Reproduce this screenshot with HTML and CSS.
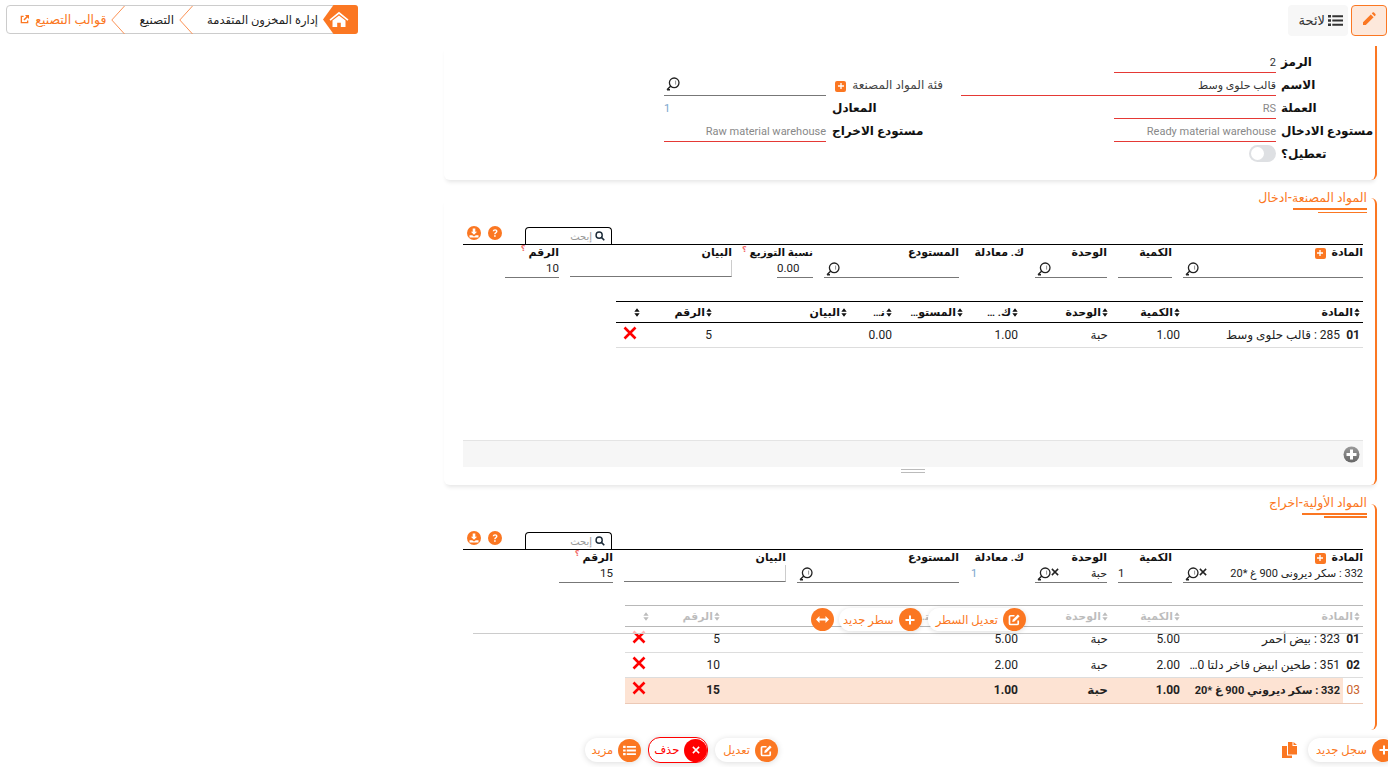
FILE: index.html
```html
<!DOCTYPE html>
<html lang="ar" dir="rtl">
<head>
    <meta charset="UTF-8">
    <title>قوالب التصنيع</title>
    <link rel="stylesheet" href="styles.css">
</head>
<body>
    <svg class="defs" width="0" height="0">
        <symbol id="i-search" viewBox="0 0 14 14"><circle cx="8.2" cy="5.8" r="4.8" fill="none" stroke="currentColor" stroke-width="1.3"/><path d="M4.8 9 1 12.8M1 12.8h3" fill="none" stroke="currentColor" stroke-width="1.4"/><path d="M9.6 3.6v4" stroke="currentColor" stroke-width=".8" opacity=".6"/></symbol>
        <symbol id="i-sort" viewBox="0 0 7 10"><path d="M3.5 0 6.6 4H.4zM3.5 10 .4 6h6.2z" fill="currentColor"/></symbol>
        <symbol id="i-x" viewBox="0 0 14 14"><path d="M1.5 1.5 12.5 12.5M12.5 1.5 1.5 12.5" stroke="currentColor" stroke-width="2.6"/></symbol>
        <symbol id="i-plus" viewBox="0 0 12 12"><path d="M6 1.5v9M1.5 6h9" stroke="currentColor" stroke-width="2"/></symbol>
        <symbol id="i-edit" viewBox="0 0 14 14"><path d="M11 8v3.2c0 .7-.5 1.2-1.2 1.2H2.8c-.7 0-1.2-.5-1.2-1.2V4.200c0-.7.5-1.200 1.200-1.200H7" fill="none" stroke="currentColor" stroke-width="1.800"/><path d="M5 7.300 10.600 1.700l1.900 1.900L6.900 9.200l-2.300.4z" fill="currentColor"/></symbol>
        <symbol id="i-list" viewBox="0 0 14 12"><path d="M0 .8h2.800v2.400H0zM0 4.800h2.800v2.400H0zM0 8.800h2.800v2.400H0zM4 1h10v2H4zM4 5h10v2H4zM4 9h10v2H4z" fill="currentColor"/></symbol>
        <symbol id="i-download" viewBox="0 0 14 14"><circle cx="7" cy="7" r="7" fill="currentColor"/><path d="M5.700 2.500h2.600v3.300h1.800L7 8.800 3.900 5.800h1.800zM2.500 9.300h2.700L7 10.500l1.800-1.200h2.700v2.200h-9z" fill="#fff"/></symbol>
        <symbol id="i-help" viewBox="0 0 14 14"><circle cx="7" cy="7" r="7" fill="currentColor"/><path d="M4.700 5.300C4.800 4 5.800 3.200 7.100 3.200c1.400 0 2.400.8 2.400 2 0 1.800-1.900 1.700-1.900 3H6.200c0-2 1.800-1.900 1.800-3 0-.5-.4-.8-.9-.8s-.9.400-1 .9zM6.100 9.300h1.600v1.500H6.100z" fill="#fff"/></symbol>
    </svg>

    <div class="page">
        <header class="topbar">
            <button class="edit-toggle">
                <svg width="14" height="14" viewBox="0 0 14 14"><path d="M1 10.200 8.800 2.400l2.800 2.800L3.800 13H1zM9.800 1.400l.8-.8c.4-.4 1-.4 1.400 0l1.400 1.400c.4.4.4 1 0 1.400l-.8.800z" fill="currentColor"/></svg>
            </button>
            <button class="list-toggle">
                <svg width="15" height="13"><use href="#i-list"/></svg>
                <span>لائحة</span>
            </button>
            <nav class="crumbs">
                <span class="crumb-home">
                    <svg width="20" height="17" viewBox="0 0 20 17"><path d="M10 .8 19.500 8.600l-1 1.200L10 3 1.500 9.800l-1-1.200zM3.500 9.600 10 4.500l6.500 5.100V16h-4.700v-4.200H8.200V16H3.500z" fill="#fff"/></svg>
                </span>
                <span class="crumb-text crumb-first">إدارة المخزون المتقدمة</span>
                <svg class="chev" width="14" height="28" viewBox="0 0 14 28"><path d="M13.500 0 .8 14l12.700 14" fill="none" stroke="currentColor"/></svg>
                <span class="crumb-text">التصنيع</span>
                <svg class="chev" width="14" height="28" viewBox="0 0 14 28"><path d="M13.500 0 .8 14l12.700 14" fill="none" stroke="currentColor"/></svg>
                <span class="crumb-text crumb-last">قوالب التصنيع</span>
                <svg class="crumb-ext" width="9" height="9" viewBox="0 0 10 10"><path d="M4 1.500H1.500v7h7V6" fill="none" stroke="currentColor" stroke-width="1.500"/><path d="M5.500 0H10v4.500L8.300 2.900 5 6.200 3.800 5 7.100 1.700z" fill="currentColor"/></svg>
            </nav>
        </header>

        <main class="main">
            <section class="card card-head">
                <div class="head-grid">
                    <label class="lbl c-label r1">الرمز</label>
                    <div class="val line-red c-input r1 dark">2</div>

                    <label class="lbl c-label r2">الاسم</label>
                    <div class="val line-red c-name r2 dark">قالب حلوى وسط</div>
                    <label class="lbl-plain c-cat r2">فئة المواد المصنعة <span class="plus-box"><svg width="8" height="8"><use href="#i-plus"/></svg></span></label>
                    <div class="line-gray c-input2 r2 lookup"><svg class="mag" width="14" height="14"><use href="#i-search"/></svg></div>

                    <label class="lbl c-label r3">العملة</label>
                    <div class="val line-red c-input r3">RS</div>
                    <label class="lbl c-label2 r3">المعادل</label>
                    <div class="val c-input2 r3 blue to-left">1</div>

                    <label class="lbl c-label r4">مستودع الادخال</label>
                    <div class="val line-red c-input r4">Ready material warehouse</div>
                    <label class="lbl c-label2 r4">مستودع الاخراج</label>
                    <div class="val line-red c-input2 r4">Raw material warehouse</div>

                    <label class="lbl c-label r5">تعطيل؟</label>
                    <div class="c-input r5"><span class="switch"></span></div>
                </div>
            </section>

            <section class="card card-in">
                <h2 class="sec-title">المواد المصنعة-ادخال</h2>
                <div class="under-thick u-in"></div>
                <div class="under-thin u-in2"></div>

                <div class="toolbar">
                    <div class="search-tab"><svg width="10" height="10" viewBox="0 0 14 14"><circle cx="5.800" cy="5.800" r="4.300" fill="none" stroke="currentColor" stroke-width="2"/><path d="m9 9 4 4" stroke="currentColor" stroke-width="2.200"/></svg><span>إبحث</span></div>
                    <svg class="tool" width="14" height="14"><use href="#i-help"/></svg>
                    <svg class="tool" width="14" height="14"><use href="#i-download"/></svg>
                </div>

                <div class="form-row">
                    <div class="f w180"><label>المادة <span class="plus-box"><svg width="8" height="8"><use href="#i-plus"/></svg></span></label><div class="fi lookup"><svg class="mag" width="14" height="14"><use href="#i-search"/></svg></div></div>
                    <div class="f w54"><label>الكمية</label><div class="fi"></div></div>
                    <div class="f w72"><label>الوحدة</label><div class="fi lookup"><svg class="mag" width="14" height="14"><use href="#i-search"/></svg></div></div>
                    <div class="f w54"><label>ك. معادلة</label></div>
                    <div class="f w135"><label>المستودع</label><div class="fi lookup"><svg class="mag" width="14" height="14"><use href="#i-search"/></svg></div></div>
                    <div class="f w70"><label class="lbl-tight">نسبة التوزيع<sup>؟</sup></label><div class="fi short to-left">0.00</div></div>
                    <div class="f w162"><label>البيان</label><div class="fi area"></div></div>
                    <div class="f w54"><label>الرقم<sup>؟</sup></label><div class="fi">10</div></div>
                </div>

                <div class="table-wrap wrap-in">
                    <table class="grid">
                        <colgroup><col class="k1"><col class="k2"><col class="k3"><col class="k4"><col class="k5"><col class="k6"><col class="k7"><col class="k8"><col class="k9"><col class="k10"></colgroup>
                        <thead><tr>
                            <th colspan="2"><svg class="sort" width="6" height="9"><use href="#i-sort"/></svg>المادة</th>
                            <th><svg class="sort" width="6" height="9"><use href="#i-sort"/></svg>الكمية</th>
                            <th><svg class="sort" width="6" height="9"><use href="#i-sort"/></svg>الوحدة</th>
                            <th class="cut"><svg class="sort" width="6" height="9"><use href="#i-sort"/></svg>ك. معادلة</th>
                            <th class="cut cut-wide"><svg class="sort" width="6" height="9"><use href="#i-sort"/></svg>المستودع</th>
                            <th class="cut"><svg class="sort" width="6" height="9"><use href="#i-sort"/></svg>نسبة التوزيع</th>
                            <th><svg class="sort" width="6" height="9"><use href="#i-sort"/></svg>البيان</th>
                            <th><svg class="sort" width="6" height="9"><use href="#i-sort"/></svg>الرقم</th>
                            <th><svg class="sort" width="6" height="9"><use href="#i-sort"/></svg></th>
                        </tr></thead>
                        <tbody><tr>
                            <td class="idx">01</td><td>285 : قالب حلوى وسط</td><td>1.00</td><td>حبة</td><td>1.00</td><td></td><td>0.00</td><td></td><td>5</td>
                            <td class="del"><svg width="14" height="14"><use href="#i-x"/></svg></td>
                        </tr></tbody>
                    </table>
                </div>

                <div class="grid-foot">
                    <svg width="17" height="17" viewBox="0 0 17 17"><defs><linearGradient id="gr" x1="0" y1="0" x2="0" y2="1"><stop offset="0" stop-color="#9a9a9a"/><stop offset="1" stop-color="#666"/></linearGradient></defs><circle cx="8.500" cy="8.500" r="8" fill="url(#gr)"/><path d="M8.500 3.500v10M3.500 8.500h10" stroke="#fff" stroke-width="3"/></svg>
                </div>
                <div class="grip"></div>
            </section>

            <section class="card card-out">
                <h2 class="sec-title">المواد الأولية-اخراج</h2>
                <div class="under-thick u-out"></div>
                <div class="under-thin u-out2"></div>

                <div class="toolbar">
                    <div class="search-tab"><svg width="10" height="10" viewBox="0 0 14 14"><circle cx="5.800" cy="5.800" r="4.300" fill="none" stroke="currentColor" stroke-width="2"/><path d="m9 9 4 4" stroke="currentColor" stroke-width="2.200"/></svg><span>إبحث</span></div>
                    <svg class="tool" width="14" height="14"><use href="#i-help"/></svg>
                    <svg class="tool" width="14" height="14"><use href="#i-download"/></svg>
                </div>

                <div class="form-row">
                    <div class="f w180"><label>المادة <span class="plus-box"><svg width="8" height="8"><use href="#i-plus"/></svg></span></label><div class="fi lookup"><span class="fi-text">332 : سكر ديرونى 900 غ *20</span><svg class="clr" width="8" height="8"><use href="#i-x"/></svg><svg class="mag-x" width="14" height="14"><use href="#i-search"/></svg></div></div>
                    <div class="f w54"><label>الكمية</label><div class="fi to-left">1</div></div>
                    <div class="f w72"><label>الوحدة</label><div class="fi lookup"><span class="fi-text">حبة</span><svg class="clr" width="8" height="8"><use href="#i-x"/></svg><svg class="mag-x" width="14" height="14"><use href="#i-search"/></svg></div></div>
                    <div class="f w54"><label>ك. معادلة</label><div class="fi bare">1</div></div>
                    <div class="f w162"><label>المستودع</label><div class="fi lookup"><svg class="mag" width="14" height="14"><use href="#i-search"/></svg></div></div>
                    <div class="f w162"><label>البيان</label><div class="fi area"></div></div>
                    <div class="f w54"><label>الرقم<sup>؟</sup></label><div class="fi">15</div></div>
                </div>

                <div class="table-wrap wrap-out">
                    <table class="grid grid-out">
                        <colgroup><col class="k1"><col class="k2"><col class="k3"><col class="k4"><col class="k5"><col class="k6"><col class="o7"><col class="o8"><col class="o9"><col class="k10"></colgroup>
                        <thead><tr>
                            <th colspan="2"><svg class="sort" width="6" height="9"><use href="#i-sort"/></svg>المادة</th>
                            <th><svg class="sort" width="6" height="9"><use href="#i-sort"/></svg>الكمية</th>
                            <th><svg class="sort" width="6" height="9"><use href="#i-sort"/></svg>الوحدة</th>
                            <th class="cut"><svg class="sort" width="6" height="9"><use href="#i-sort"/></svg>ك. معادلة</th>
                            <th class="cut"><svg class="sort" width="6" height="9"><use href="#i-sort"/></svg>المستودع</th>
                            <th></th>
                            <th><svg class="sort" width="6" height="9"><use href="#i-sort"/></svg>البيان</th>
                            <th><svg class="sort" width="6" height="9"><use href="#i-sort"/></svg>الرقم</th>
                            <th><svg class="sort" width="6" height="9"><use href="#i-sort"/></svg></th>
                        </tr></thead>
                        <tbody>
                            <tr><td class="idx">01</td><td class="name">323 : بيض أحمر</td><td>5.00</td><td>حبة</td><td>5.00</td><td></td><td></td><td></td><td>5</td><td class="del"><svg width="14" height="14"><use href="#i-x"/></svg></td></tr>
                            <tr><td class="idx">02</td><td class="name">351 : طحين ابيض فاخر دلتا 000 كغ</td><td>2.00</td><td>حبة</td><td>2.00</td><td></td><td></td><td></td><td>10</td><td class="del"><svg width="14" height="14"><use href="#i-x"/></svg></td></tr>
                            <tr class="current"><td class="idx">03</td><td class="name">332 : سكر ديروني 900 غ *20</td><td>1.00</td><td>حبة</td><td>1.00</td><td></td><td></td><td></td><td>15</td><td class="del"><svg width="14" height="14"><use href="#i-x"/></svg></td></tr>
                        </tbody>
                    </table>
                    <div class="row-actions">
                        <button class="pill pill-edit"><span class="dot"><svg width="13" height="13"><use href="#i-edit"/></svg></span>تعديل السطر</button>
                        <button class="pill pill-line"><span class="dot"><svg width="12" height="12"><use href="#i-plus"/></svg></span>سطر جديد</button>
                        <button class="dot dot-solo"><svg width="13" height="9" viewBox="0 0 13 9"><path d="M0 4.500 3.500 1v2.500h6V1L13 4.500 9.500 8V5.500h-6V8z" fill="currentColor"/></svg></button>
                    </div>
                </div>
            </section>

            <footer class="actions">
                <button class="pill pill-new"><span class="dot"><svg width="12" height="12"><use href="#i-plus"/></svg></span>سجل جديد</button>
                <svg class="copy" width="17" height="16" viewBox="0 0 17 16"><path d="M6 0h4.500v4H15v8.500H6zM11.500 0 15 3h-3.500zM0 4h5v9.500h5V16H0z" fill="currentColor"/></svg>
                <div class="actions-mid">
                    <button class="pill pill-wide"><span class="dot"><svg width="13" height="13"><use href="#i-edit"/></svg></span>تعديل</button>
                    <button class="pill pill-del"><span class="dot"><svg width="8" height="8"><use href="#i-x"/></svg></span>حذف</button>
                    <button class="pill"><span class="dot"><svg width="13" height="11"><use href="#i-list"/></svg></span>مزيد</button>
                </div>
            </footer>
        </main>
    </div>
</body>
</html>
```

FILE: styles.css
```css
* {
    box-sizing: border-box;
}

html, body {
    margin: 0;
    height: 100%;
    overflow: hidden;
}

body {
    font-family: Roboto, "DejaVu Sans", sans-serif;
    font-size: 12px;
    color: #222;
    background-color: #fff;
}

button {
    font-family: inherit;
    cursor: pointer;
}

.defs {
    position: absolute;
}

.page {
    width: 1388px;
    height: 767px;
    overflow: hidden;
}

/* Top bar */
.topbar {
    display: flex;
    align-items: flex-start;
    height: 46px;
    padding: 5px 1px 0 6px;
}

.edit-toggle {
    width: 36px;
    height: 31px;
    margin-left: 3px;
    padding: 0;
    color: #fb7722;
    background-color: #fde8db;
    border: 1px solid #fb7722;
    border-radius: 4px;
}

.list-toggle {
    display: flex;
    align-items: center;
    gap: 3px;
    width: 60px;
    height: 31px;
    padding: 0 5px;
    font-size: 13px;
    color: #333;
    background-color: #f7f7f7;
    border: 0;
    border-radius: 4px;
}

.crumbs {
    display: flex;
    align-items: center;
    width: 352px;
    height: 29px;
    margin-right: auto;
    font-size: 12px;
    border: 1px solid #ccc;
    border-radius: 4px;
}

.crumb-home {
    display: flex;
    align-items: center;
    justify-content: center;
    width: 35px;
    height: 29px;
    margin: -1px -1px -1px 0;
    padding-right: 3px;
    background-color: #fb7722;
    border-radius: 0 3px 3px 0;
    clip-path: polygon(100% 0, 100% 100%, 30% 100%, 0 50%, 30% 0);
}

.crumb-text {
    margin-right: 5px;
    white-space: nowrap;
}

.crumb-first {
    font-size: 11.500px;
}

.crumb-last {
    font-size: 12.500px;
    color: #fb7722;
}

.chev {
    margin-right: 14px;
    color: #fb9255;
}

.crumb-ext {
    margin-right: 6px;
    color: #fb7722;
}

/* Cards */
.main {
    width: 933px;
    margin-right: 11px;
}

.card {
    padding-top: 1px;
    border-right: 2px solid #fb7722;
    border-radius: 0 0 6px 6px;
    box-shadow: 0 4px 4px -2px rgba(0, 0, 0, 0.1);
}

.card-head {
    height: 134px;
    padding-top: 4px;
}

.card-in {
    height: 287px;
    margin-top: 18px;
    padding-right: 12px;
    padding-left: 19px;
    border-top-right-radius: 6px;
}

.card-out {
    height: 226px;
    margin-top: 19px;
    padding-right: 12px;
    padding-left: 19px;
    border-top-right-radius: 6px;
    box-shadow: none;
}

/* Head form */
.head-grid {
    display: grid;
    grid-template-columns: 94px 5px 162px 153px 129px 6px 162px;
    grid-template-rows: repeat(5, 23px);
}

.c-label { grid-column: 1; }
.c-input { grid-column: 3; }
.c-name { grid-column: 3 / 5; }
.c-cat { grid-column: 5; }
.c-label2 { grid-column: 5 / 6; }
.c-input2 { grid-column: 7; }
.r1 { grid-row: 1; }
.r2 { grid-row: 2; }
.r3 { grid-row: 3; }
.r4 { grid-row: 4; }
.r5 { grid-row: 5; }

.lbl {
    padding-top: 1px;
    font-size: 12px;
    font-weight: 600;
    line-height: 23px;
    color: #111;
    text-align: left;
    white-space: nowrap;
}

.lbl-plain {
    padding-top: 1px;
    padding-right: 18px;
    font-size: 12px;
    line-height: 23px;
    color: #444;
    white-space: nowrap;
}

.val {
    height: 23px;
    padding-top: 4px;
    font-size: 11px;
    line-height: 18px;
    color: #888;
    white-space: nowrap;
}

.dark { color: #333; }
.blue { color: #7aa5cc; }
.to-left { text-align: left; }

.line-red { border-bottom: 1px solid #e53935; }
.line-gray { border-bottom: 1px solid #777; height: 23px; }

.lookup {
    display: flex;
    align-items: center;
}

.mag {
    margin-right: auto;
    margin-left: 2px;
    color: #222;
}

.plus-box {
    display: inline-flex;
    align-items: center;
    justify-content: center;
    width: 11px;
    height: 11px;
    margin-right: 3px;
    color: #fff;
    vertical-align: -1px;
    background-color: #fb7722;
    border-radius: 2px;
}

.switch {
    display: block;
    position: relative;
    width: 27px;
    height: 17px;
    margin-top: 3px;
    background-color: #dee0e3;
    border-radius: 9px;
}

.switch::after {
    content: "";
    position: absolute;
    top: 2px;
    left: 2px;
    width: 13px;
    height: 13px;
    background-color: #fff;
    border-radius: 50%;
}

/* Section titles */
.sec-title {
    height: 20px;
    margin: -11px -4px 0 0;
    font-size: 12.500px;
    font-weight: 500;
    line-height: 20px;
    color: #fb7722;
}

.card-out .sec-title {
    margin-top: -12px;
}

.under-thick {
    height: 2px;
    margin-right: -4px;
    background-color: #fb7722;
}

.under-thin {
    height: 1px;
    margin: 2px -4px 0 0;
    background-color: #fb7722;
}

.u-in { width: 74px; }
.u-in2 { width: 49px; }
.u-out { width: 65px; }
.u-out2 { width: 43px; height: 2px; margin-top: 1px; }

/* Toolbar above the forms */
.toolbar {
    display: flex;
    align-items: center;
    justify-content: flex-end;
    gap: 7px;
    height: 18px;
    margin-top: 14px;
    padding-left: 4px;
    border-bottom: 1px solid #000;
}

.search-tab {
    display: flex;
    align-items: center;
    gap: 3px;
    width: 87px;
    height: 17px;
    margin-left: 16px;
    padding-right: 6px;
    font-size: 10px;
    color: #1b2a38;
    border: 1px solid #000;
    border-bottom: 0;
    border-radius: 4px 4px 0 0;
}

.search-tab span {
    color: #999;
}

.tool {
    margin-bottom: 6px;
    color: #fb7722;
}

/* Line editor */
.form-row {
    display: flex;
    gap: 11px;
    height: 33px;
}

.f {
    flex: none;
}

.w180 { width: 180px; }
.w54 { width: 54px; }
.w72 { width: 72px; }
.w135 { width: 135px; }
.w70 { width: 70px; }
.w162 { width: 162px; }

.f label {
    display: block;
    height: 15px;
    font-size: 11px;
    font-weight: 600;
    line-height: 15px;
    color: #111;
    white-space: nowrap;
}

.f .lbl-tight {
    font-size: 10.500px;
}

.f sup {
    margin-right: 3px;
    font-size: 8px;
    font-weight: 700;
    line-height: 0;
    color: #f26a6a;
}

.fi {
    height: 18px;
    font-size: 11.500px;
    line-height: 17px;
    color: #222;
    border-bottom: 1px solid #777;
}

.short {
    width: 36px;
}

.area {
    height: 17px;
    border-right: 1px solid #ccc;
}

.bare {
    padding-left: 1px;
    font-size: 11px;
    color: #7aa5cc;
    text-align: left;
    border-bottom: 0;
}

.fi-text {
    font-size: 11px;
    white-space: nowrap;
}

.clr {
    margin-right: auto;
    margin-bottom: 3px;
    color: #222;
}

.mag-x {
    margin-left: 2px;
    color: #222;
}

/* Tables */
.table-wrap {
    position: relative;
    margin-top: 23px;
}

.wrap-in {
    width: 747px;
    height: 139px;
}

.wrap-out {
    width: 738px;
    margin-top: 22px;
}

.grid {
    width: 100%;
    border-collapse: collapse;
    table-layout: fixed;
    font-size: 12px;
}

.k1 { width: 20px; }
.k2 { width: 160px; }
.k3 { width: 72px; }
.k4 { width: 90px; }
.k5 { width: 55px; }
.k6 { width: 71px; }
.k7 { width: 45px; }
.k8 { width: 135px; }
.k9 { width: 72px; }
.k10 { width: 27px; }
.o7 { width: 1px; }
.o8 { width: 171px; }
.o9 { width: 71px; }

.grid th {
    height: 21px;
    padding: 0 3px;
    font-size: 11px;
    font-weight: 600;
    color: #111;
    text-align: right;
    white-space: nowrap;
    overflow: hidden;
    text-overflow: ellipsis;
    border-top: 1px solid #000;
    border-bottom: 1px solid #000;
}

.grid .cut {
    padding-left: 16px;
}

.grid .cut-wide {
    padding-left: 12px;
}

.sort {
    margin-left: 1px;
    vertical-align: -1px;
}

.grid td {
    height: 25px;
    padding: 0 3px;
    white-space: nowrap;
    overflow: hidden;
    text-overflow: ellipsis;
    border-bottom: 1px solid #ddd;
}

.grid-out td {
    height: 25.500px;
}

.grid .name {
    padding-left: 0;
}

.current .name {
    font-size: 11px;
}

.idx {
    font-weight: 700;
}

.grid .del {
    padding-top: 3px;
    padding-right: 6px;
    color: #f00;
    vertical-align: top;
}

.del svg {
    display: block;
}

.current td {
    font-weight: 700;
    background-color: #fde3d3;
    border-bottom-color: #ecc9b6;
}

.grid .current .idx {
    font-weight: 400;
    color: #c9622a;
    background-color: #fff;
}

/* Footer strip of the first grid */
.grid-foot {
    display: flex;
    align-items: center;
    height: 27px;
    padding-right: 3px;
    background-color: #f6f6f6;
    border-top: 1px solid #e4e4e4;
}

.grip {
    width: 24px;
    height: 4px;
    margin: 2px auto 0;
    border-top: 1px solid #bbb;
    border-bottom: 1px solid #bbb;
}

/* Floating actions over the lines table */
.row-actions {
    position: absolute;
    top: -5px;
    right: 0;
    left: -152px;
    display: flex;
    align-items: flex-start;
    gap: 6px;
    height: 34px;
    padding: 8px 337px 0 0;
    background-color: rgba(255, 255, 255, 0.72);
    border-bottom: 1px solid #ccc;
}

.pill {
    display: flex;
    align-items: center;
    gap: 5px;
    height: 23px;
    padding: 0 0 0 6px;
    font-size: 11.500px;
    color: #fb7722;
    background-color: #fff;
    border: 0;
    border-radius: 12px;
    box-shadow: 0 1px 5px rgba(0, 0, 0, 0.13);
}

.pill-edit {
    padding-left: 8px;
}

.pill-line {
    padding-left: 4px;
}

.dot-solo {
    margin-right: -1px;
}

.dot {
    display: flex;
    align-items: center;
    justify-content: center;
    flex: none;
    width: 23px;
    height: 23px;
    padding: 0;
    color: #fff;
    background-color: #fb7722;
    border: 0;
    border-radius: 50%;
}

/* Page actions */
.actions {
    display: flex;
    align-items: center;
    width: 940px;
    height: 28px;
    margin: 6px -18px 0 11px;
}

.actions .pill {
    height: 24px;
    box-shadow: 0 1px 6px rgba(0, 0, 0, 0.14);
}

.pill-new {
    flex: none;
    padding-left: 8px;
}

.actions .pill-wide {
    padding-left: 8px;
}

.copy {
    margin-right: 9px;
    color: #fb7722;
}

.actions-mid {
    display: flex;
    align-items: center;
    gap: 7px;
    margin-right: 504px;
}

.actions .pill-del {
    height: 26px;
    padding: 0 0 0 5px;
    color: #f00;
    border: 1px solid #f00;
}

.pill-del .dot {
    background-color: #f00;
}
```
